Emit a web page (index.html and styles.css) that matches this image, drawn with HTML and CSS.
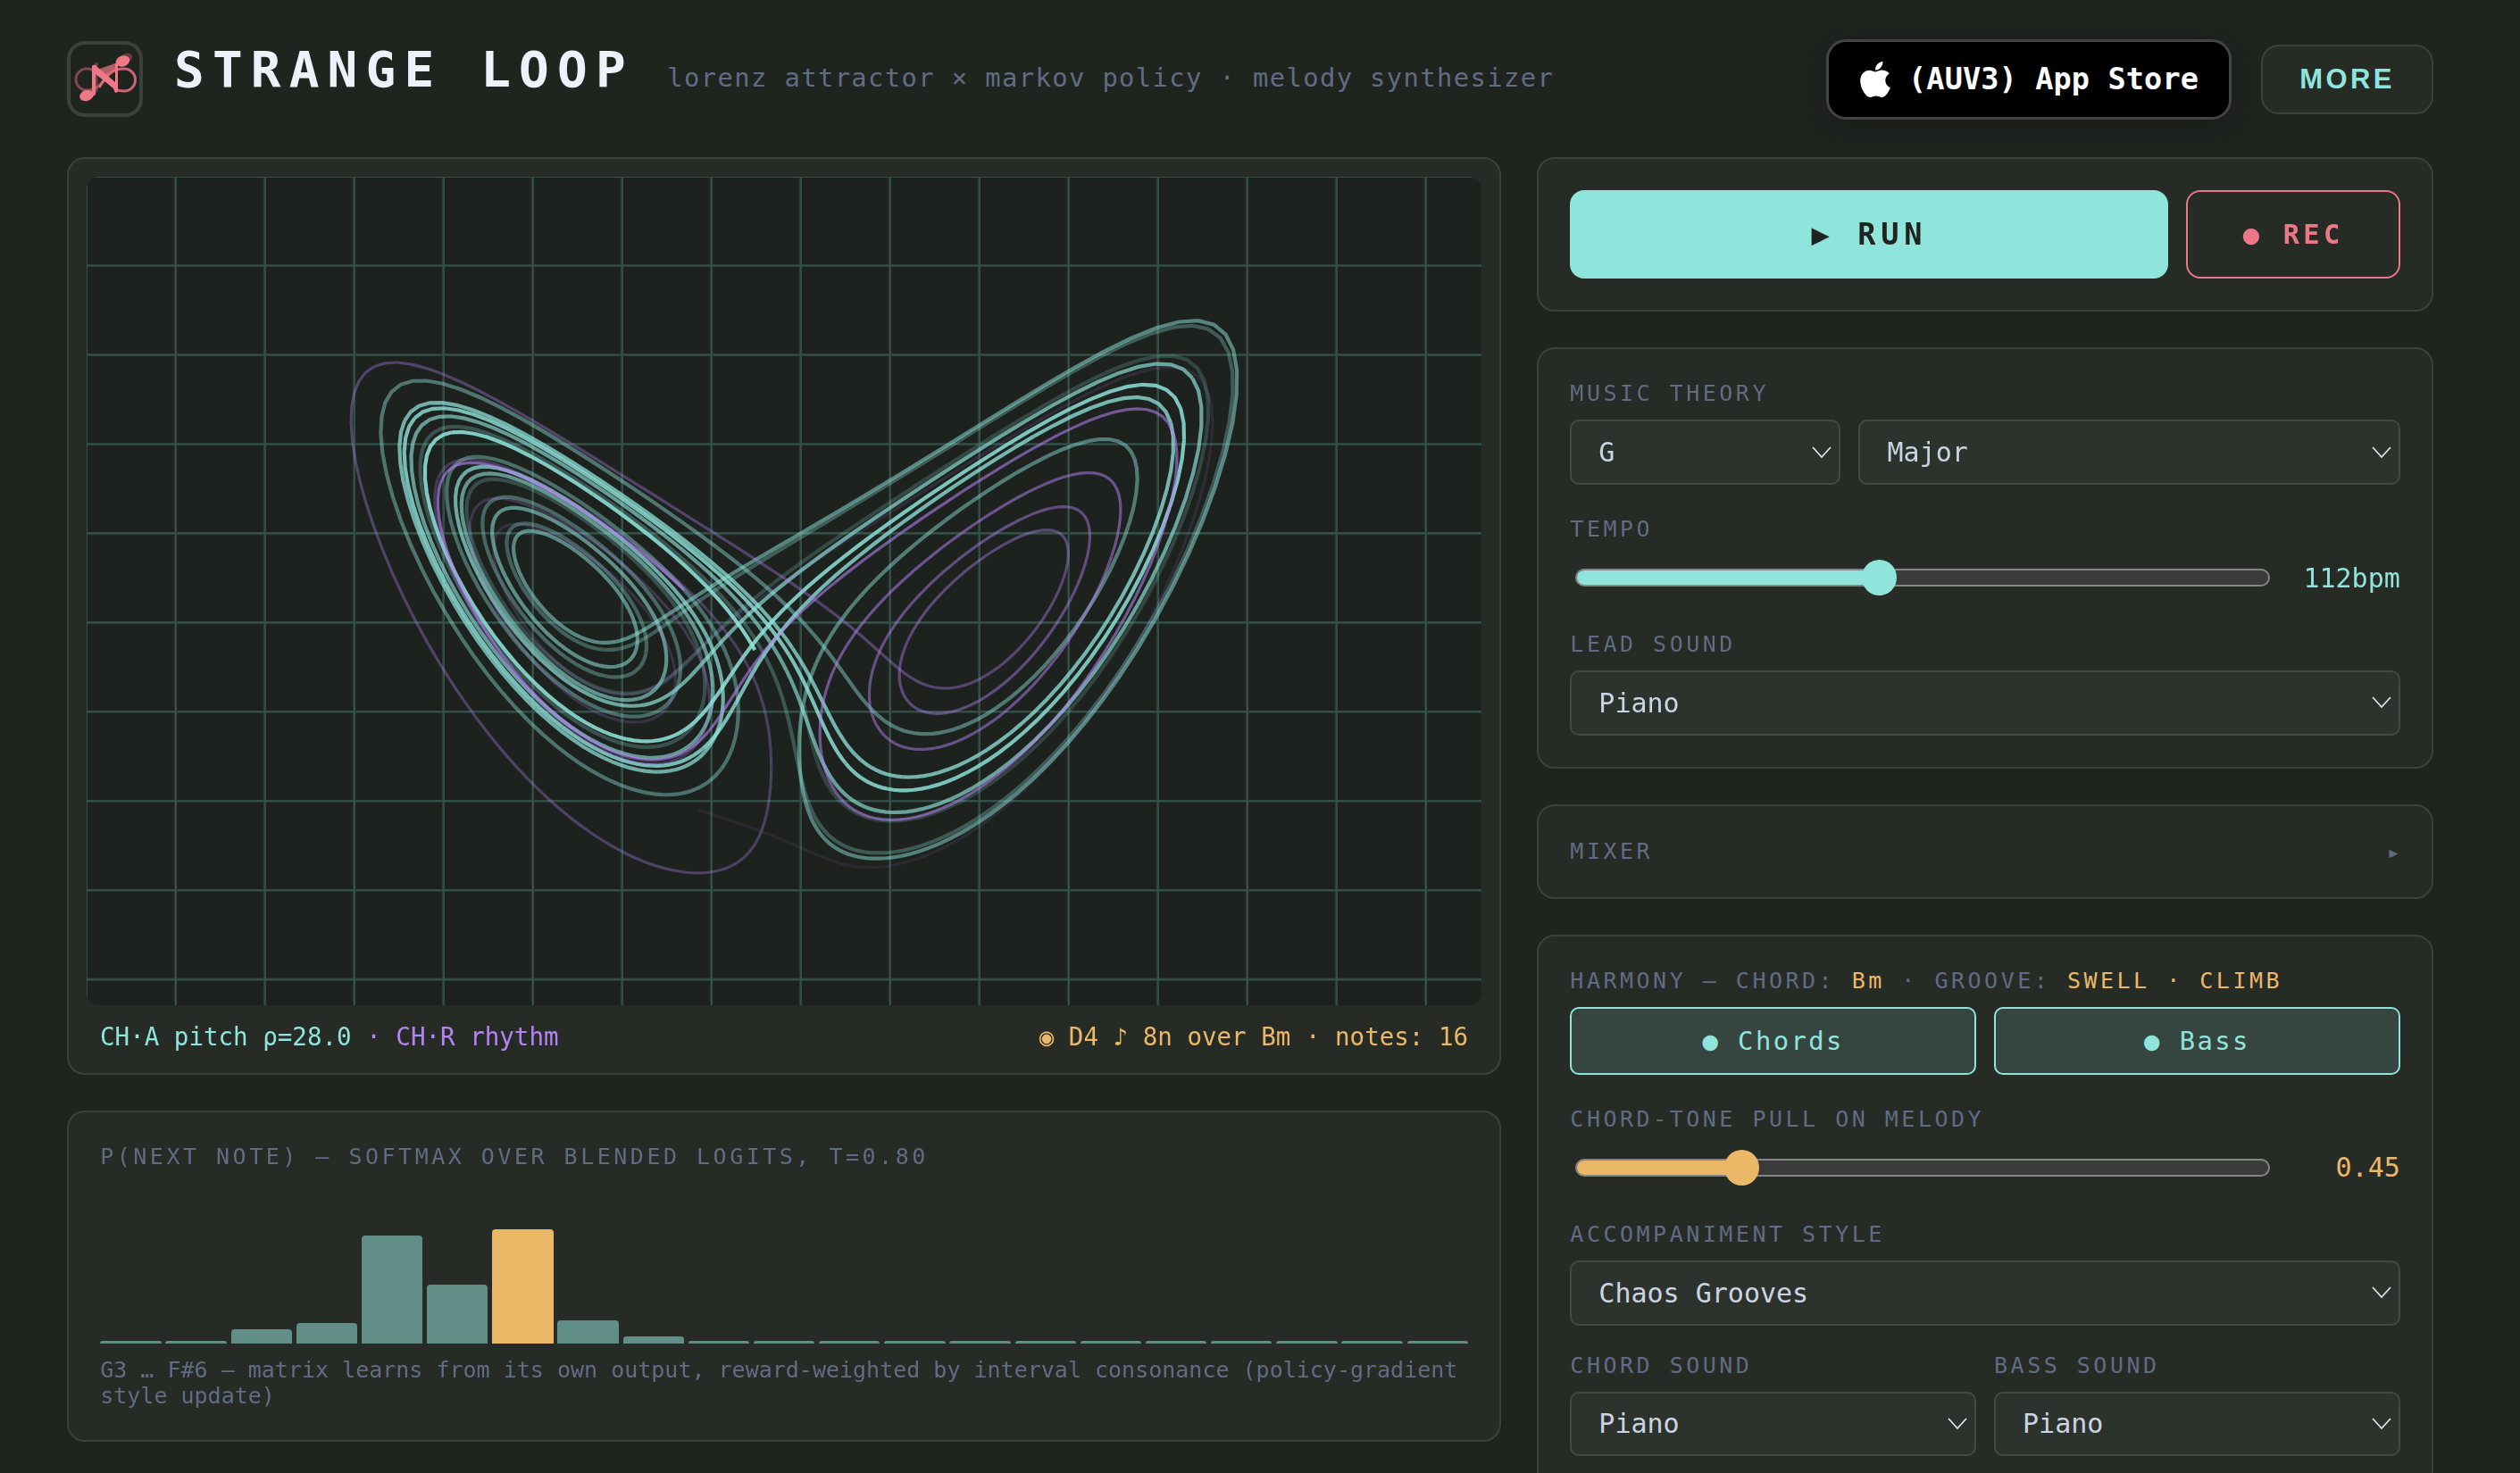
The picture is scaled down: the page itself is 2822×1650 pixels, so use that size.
FILE: index.html
```html
<!DOCTYPE html>
<html lang="en">

<head>
  <meta charset="UTF-8">
  <meta name="viewport" content="width=device-width, initial-scale=1.0">
  <title>Strange Loop</title>
  <link rel="stylesheet" href="styles.css">
</head>

<body>
  <header class="header">
    <svg class="logo" viewBox="4 4 77 77">
      <g fill="none" stroke="#ee7888" stroke-width="3">
        <path opacity=".45" d="M46 36 C38 50 32 55 22 55 A12 12 0 0 1 22 31 C26 31 29 32 31 34" />
        <path opacity=".8" d="M36 52 C46 36 52 31 64 31 A12.5 12.5 0 0 1 64 56 C60 56 56 55 53 53" />
      </g>
      <path opacity=".7" fill="#ee7888" d="M31 33 L54 25 L54 33 L40 40 Z" />
      <ellipse opacity=".3" fill="#ee7888" cx="66" cy="19" rx="7.5" ry="5" transform="rotate(-22 66 19)" />
      <path opacity=".4" fill="#ee7888" d="M31 25 L34.5 24 L34.5 57 L31 58 Z" />
      <g fill="#ee7888">
        <path d="M28 27.5 L31 26.5 L54 46 L54 25 L57 25 L57 57 L54 58 L52 53 L32 37 L32 60 L28 62 Z" />
        <ellipse cx="22" cy="61" rx="8" ry="6" transform="rotate(-18 22 61)" />
        <ellipse cx="62.5" cy="22.5" rx="8" ry="6" transform="rotate(-18 62.5 22.5)" />
      </g>
    </svg>
    <div class="brand">
      <h1 class="title">STRANGE LOOP</h1>
      <span class="subtitle">lorenz attractor × markov policy · melody synthesizer</span>
    </div>
    <a class="store-btn">
      <svg class="apple" viewBox="4 32 376 448">
        <path fill="#fff" d="M318.7 268.7c-.2-36.7 16.4-64.4 50-84.8-18.8-26.9-47.2-41.7-84.7-44.6-35.5-2.8-74.3 20.7-88.5 20.7-15 0-49.4-19.7-76.4-19.7C63.3 141.2 4 184.8 4 273.5q0 39.3 14.4 81.2c12.8 36.7 59 126.7 107.2 125.2 25.2-.6 43-17.9 75.8-17.9 31.8 0 48.3 17.9 76.4 17.9 48.6-.7 90.4-82.5 102.6-119.3-65.2-30.7-61.7-90-61.7-91.9zm-56.6-164.2c27.3-32.4 24.8-61.9 24-72.5-24.1 1.4-52 16.4-67.9 34.9-17.5 19.8-27.8 44.3-25.6 71.9 26.1 2 49.9-11.4 69.5-34.3z" />
      </svg>
      <span>(AUV3) App Store</span>
    </a>
    <button class="more-btn">MORE</button>
  </header>

  <main class="layout">
    <div class="column">
      <section class="panel scope">
        <canvas id="scope" width="1562" height="928"></canvas>
        <div class="readout">
          <span class="teal">CH·A pitch ρ=28.0 <span class="purple">· CH·R rhythm</span></span>
          <span class="gold">◉ D4 ♪ 8n over Bm · notes: 16</span>
        </div>
      </section>
      <section class="panel">
        <div class="label">P(NEXT NOTE) — SOFTMAX OVER BLENDED LOGITS, T=0.80</div>
        <div class="bars" id="bars"></div>
        <p class="note">G3 … F#6 — matrix learns from its own output, reward-weighted by interval consonance (policy-gradient style update)</p>
      </section>
    </div>

    <div class="column">
      <section class="panel transport">
        <button class="run-btn">▶ RUN</button>
        <button class="rec-btn">● REC</button>
      </section>

      <section class="panel stack">
        <div>
          <div class="label">MUSIC THEORY</div>
          <div class="row row-key">
            <div class="select"><select><option>G</option></select><svg viewBox="0 0 22 14"><path d="M1 1 L11 12 L21 1" /></svg></div>
            <div class="select"><select><option>Major</option></select><svg viewBox="0 0 22 14"><path d="M1 1 L11 12 L21 1" /></svg></div>
          </div>
        </div>
        <div>
          <div class="label">TEMPO</div>
          <div class="slider teal">
            <div class="track"><div class="fill" style="width: 43.7%"></div></div>
            <span class="value">112bpm</span>
          </div>
        </div>
        <div>
          <div class="label">LEAD SOUND</div>
          <div class="select"><select><option>Piano</option></select><svg viewBox="0 0 22 14"><path d="M1 1 L11 12 L21 1" /></svg></div>
        </div>
      </section>

      <section class="panel mixer">
        <div class="label">MIXER</div>
        <span class="arrow">▸</span>
      </section>

      <section class="panel stack">
        <div>
          <div class="label">HARMONY — CHORD: <span class="gold">Bm</span> · GROOVE: <span class="gold">SWELL · CLIMB</span></div>
          <div class="row">
            <button class="toggle">● Chords</button>
            <button class="toggle">● Bass</button>
          </div>
        </div>
        <div>
          <div class="label">CHORD-TONE PULL ON MELODY</div>
          <div class="slider gold">
            <div class="track"><div class="fill" style="width: 23.8%"></div></div>
            <span class="value">0.45</span>
          </div>
        </div>
        <div>
          <div class="label">ACCOMPANIMENT STYLE</div>
          <div class="select"><select><option>Chaos Grooves</option></select><svg viewBox="0 0 22 14"><path d="M1 1 L11 12 L21 1" /></svg></div>
        </div>
        <div class="row sounds">
          <div>
            <div class="label">CHORD SOUND</div>
            <div class="select"><select><option>Piano</option></select><svg viewBox="0 0 22 14"><path d="M1 1 L11 12 L21 1" /></svg></div>
          </div>
          <div>
            <div class="label">BASS SOUND</div>
            <div class="select"><select><option>Piano</option></select><svg viewBox="0 0 22 14"><path d="M1 1 L11 12 L21 1" /></svg></div>
          </div>
        </div>
      </section>
    </div>
  </main>
  <script src="script.js"></script>
</body>

</html>
```
FILE: styles.css
```css
* {
  box-sizing: border-box;
}

html {
  font-size: 32px;
}

body {
  margin: 0;
  height: 1650px;
  overflow: hidden;
  padding: 43.5px 97px 0 75px;
  background: #1f241f;
  color: #ccd3e3;
  font-family: "DejaVu Sans Mono", monospace;
}

button,
select {
  font-family: inherit;
}

.teal {
  color: #8fe5dc;
}

.purple {
  color: #b583f5;
}

.gold {
  color: #ebb868;
}

.header {
  display: flex;
  align-items: center;
  height: 90px;
  margin-bottom: 42.5px;
}

.logo {
  width: 85px;
  height: 85px;
  border: 4px solid #3c413b;
  border-radius: 20px;
}

.brand {
  display: flex;
  align-items: baseline;
  flex: 1;
  margin-left: 35px;
  padding-bottom: 23px;
  white-space: nowrap;
}

.title {
  margin: 0;
  font-size: 1.75rem;
  letter-spacing: 0.164em;
  color: #edf1fa;
}

.subtitle {
  margin-left: 37.5px;
  font-size: 0.9rem;
  letter-spacing: 0.0485em;
  color: #606c84;
}

.store-btn {
  display: flex;
  align-items: center;
  gap: 20px;
  width: 454px;
  height: 90px;
  padding-left: 35px;
  background: #000;
  border: 3px solid #444;
  border-radius: 22px;
  box-shadow: 0 8px 28px rgba(24, 24, 24, 0.7);
  color: #fff;
  font-size: 1.05rem;
  font-weight: bold;
  letter-spacing: 0.003em;
  white-space: nowrap;
}

.apple {
  width: 34px;
  height: 40px;
}

.more-btn {
  width: 193px;
  height: 78px;
  margin-left: 33px;
  padding: 0;
  background: #272b26;
  border: 2px solid #3c413b;
  border-radius: 20px;
  color: #8fe5dc;
  font-family: "Liberation Sans", Arial, sans-serif;
  font-size: 31px;
  font-weight: bold;
  letter-spacing: 0.11em;
}

.layout {
  display: grid;
  grid-template-columns: 1.6fr 1fr;
  gap: 40px;
  align-items: start;
}

.column {
  display: flex;
  flex-direction: column;
  gap: 40px;
  min-width: 0;
}

.panel {
  padding: 35.2px;
  background: #272b26;
  border: 2px solid #3c413b;
  border-radius: 20px;
}

.scope {
  height: 1028px;
  padding: 20px;
}

#scope {
  display: block;
  width: 100%;
  height: 928px;
  border-radius: 14px;
  background: #1e221f;
}

.readout {
  display: flex;
  justify-content: space-between;
  padding: 19px 15px 0;
  font-size: 0.86rem;
  line-height: 32px;
}

.label {
  margin-bottom: 15px;
  font-size: 25px;
  line-height: 29px;
  letter-spacing: 3.5px;
  color: #606c84;
  white-space: nowrap;
}

.bars {
  display: flex;
  align-items: flex-end;
  gap: 4.8px;
  height: 180px;
}

.bar {
  flex: 1;
  min-height: 3px;
  background: #618f88;
  border-radius: 4px 4px 0 0;
}

.bar.active {
  background: #ebb868;
}

.note {
  margin: 15px 0 0;
  font-size: 25px;
  line-height: 29px;
  color: #606c84;
}

.transport {
  display: grid;
  grid-template-columns: 1fr 239.5px;
  gap: 20px;
}

.run-btn,
.rec-btn {
  height: 98.8px;
  border-radius: 16px;
  font-weight: bold;
}

.run-btn {
  background: #8fe5dc;
  border: none;
  color: #1f241f;
  font-size: 1.05rem;
  letter-spacing: 0.17em;
}

.rec-btn {
  background: transparent;
  border: 2px solid #ea7886;
  color: #ea7886;
  font-size: 0.95rem;
  letter-spacing: 0.14em;
}

.stack {
  display: flex;
  flex-direction: column;
  gap: 34.6px;
}

.row {
  display: grid;
  grid-template-columns: 1fr 1fr;
  gap: 20px;
}

.row-key {
  grid-template-columns: 1fr 2fr;
}

.sounds {
  margin-top: -4.6px;
}

.select {
  display: flex;
  align-items: center;
  height: 72.8px;
  padding: 0 8px 0 30px;
  background: #2c322c;
  border: 2px solid #414b43;
  border-radius: 10px;
}

.select select {
  appearance: none;
  flex: 1;
  min-width: 0;
  padding: 0;
  background: none;
  border: none;
  color: #ccd3e3;
  font-size: 30px;
}

.select svg {
  width: 22px;
  height: 14px;
  fill: none;
  stroke: #dde2ea;
  stroke-width: 1.8;
}

.slider {
  display: flex;
  align-items: center;
  height: 50.5px;
}

.track {
  width: 778px;
  height: 20px;
  margin-left: 6px;
  background: #3b3b3b;
  border: 2px solid #858585;
  border-radius: 10px;
}

.fill {
  position: relative;
  height: 16px;
  background: currentColor;
  border-radius: 8px 0 0 8px;
}

.fill::after {
  content: "";
  position: absolute;
  right: -19px;
  top: -12px;
  width: 39px;
  height: 40px;
  border-radius: 50%;
  background: currentColor;
}

.value {
  flex: 1;
  font-size: 30px;
  text-align: right;
}

.mixer {
  display: flex;
  justify-content: space-between;
  height: 106px;
}

.mixer .label {
  line-height: 32px;
}

.arrow {
  font-size: 25px;
  line-height: 34px;
  color: #606c84;
}

.toggle {
  height: 76px;
  background: #364540;
  border: 2px solid #8fe5dc;
  border-radius: 10px;
  color: #8fe5dc;
  font-size: 0.9rem;
  letter-spacing: 0.085em;
}
```
FILE: script.js
```js
document.addEventListener('DOMContentLoaded', () => {
  const barHeights = [3, 3, 16, 23, 121, 66, 128, 26, 8, 3, 3, 3, 3, 3, 3, 3, 3, 3, 3, 3, 3];
  const activeBar = 6;

  const barsElement = document.getElementById('bars');
  const canvas = document.getElementById('scope');
  const ctx = canvas.getContext('2d');

  function renderBars() {
    barHeights.forEach((height, i) => {
      const bar = document.createElement('div');
      bar.classList.add('bar');
      if (i === activeBar) bar.classList.add('active');
      bar.style.height = height + 'px';
      barsElement.appendChild(bar);
    });
  }

  function drawGrid() {
    ctx.strokeStyle = 'rgba(110, 200, 180, 0.27)';
    ctx.lineWidth = 2.6;
    ctx.beginPath();
    for (let x = -0.3; x < canvas.width; x += 100) {
      ctx.moveTo(x, 0);
      ctx.lineTo(x, canvas.height);
    }
    for (let y = -0.4; y < canvas.height; y += 99.95) {
      ctx.moveTo(0, y);
      ctx.lineTo(canvas.width, y);
    }
    ctx.stroke();
  }

  // lorenz system, plain euler steps
  function lorenz(start, rho, dt, steps) {
    let { x, y, z } = start;
    const points = [];
    for (let i = 0; i < steps; i++) {
      points.push([x, z]);
      const nx = x + dt * 10 * (y - x);
      const ny = y + dt * (x * (rho - z) - y);
      const nz = z + dt * (x * y - 8 / 3 * z);
      x = nx;
      y = ny;
      z = nz;
    }
    return points;
  }

  // older points fade out
  function drawTrail(points, style) {
    ctx.strokeStyle = style.color;
    ctx.lineWidth = style.width;
    for (let i = 0; i < points.length - 1; i += 10) {
      ctx.globalAlpha = style.from + (style.to - style.from) * i / points.length;
      ctx.beginPath();
      points.slice(i, i + 11).forEach(([x, z]) => {
        ctx.lineTo(style.cx + x * style.scale, 464.3 - (z - 27) * 16.4);
      });
      ctx.stroke();
    }
    ctx.globalAlpha = 1;
  }

  renderBars();
  drawGrid();

  const pitch = lorenz({ x: 0.8, y: 1.2883399590554543, z: 19.2 }, 28, 0.008, 1848);
  drawTrail(pitch, { color: '#8fe5dc', width: 4.2, from: 0.17, to: 0.88, cx: 781.2, scale: 28.46 });

  const rhythm = lorenz({ x: -3.4, y: 5.301292322201655, z: 12.1 }, 26.6, 0.006, 1178);
  drawTrail(rhythm, { color: '#b583f5', width: 3.2, from: 0.08, to: 0.64, cx: 780.6, scale: 28.28 });
});
```
